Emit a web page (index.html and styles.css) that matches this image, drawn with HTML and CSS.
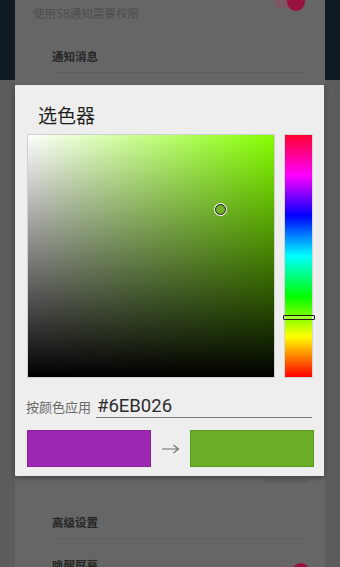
FILE: index.html
```html
<!DOCTYPE html>
<html lang="zh-CN">
<head>
<meta charset="utf-8">
<title>选色器</title>
<link rel="stylesheet" href="styles.css">
</head>
<body>
<div class="screen">
  <div class="card">
    <div class="pref">
      <span class="summary">使用S8通知需要权限</span>
      <span class="switch switch-top"></span>
    </div>
    <div class="cat">通知消息</div>
    <div class="hidden-area">
      <span class="hidden-btn"></span>
    </div>
    <div class="cat">高级设置</div>
    <div class="pref-title">
      <span class="title-text">唤醒屏幕</span>
      <span class="switch switch-bottom"></span>
    </div>
  </div>

  <div class="dialog">
    <div class="dlg-title">选色器</div>
    <div class="picker">
      <div class="sv">
        <span class="sv-marker"></span>
      </div>
      <div class="hue">
        <span class="hue-handle"></span>
      </div>
    </div>
    <div class="hex-row">
      <span class="hex-label">按颜色应用</span>
      <span class="hex-input">#6EB026</span>
    </div>
    <div class="swatches">
      <span class="swatch swatch-old"></span>
      <svg class="arrow" width="19" height="10" viewBox="0 0 19 10">
        <path d="M1 5 H17.5 M12.5 1 L17.5 5 L12.5 9" fill="none" stroke="#6f6f6f" stroke-width="1.1"/>
      </svg>
      <span class="swatch swatch-new"></span>
    </div>
  </div>
</div>
</body>
</html>
```
FILE: styles.css
```css
* { box-sizing: border-box; }
html, body { margin: 0; padding: 0; }
body {
  font-family: "Noto Sans CJK SC", "Noto Sans", sans-serif;
  background: #5c5c5c;
}
.screen {
  position: relative;
  width: 340px;
  height: 567px;
  overflow: hidden;
  background: linear-gradient(#101a22 0, #101a22 80px, #5c5c5c 80px);
}
.card {
  margin: 0 15px;
  height: 100%;
  background: #666666;
  overflow: hidden;
}
.pref {
  height: 26px;
  display: flex;
  align-items: center;
  justify-content: space-between;
  padding: 0 25px 0 18px;
}
.summary {
  font-size: 11.6px;
  color: #4e4e4e;
  line-height: 14px;
}
.switch {
  position: relative;
  width: 26px;
  height: 12px;
  border-radius: 6px;
  background: #7a5864;
}
.switch::after {
  content: "";
  position: absolute;
  left: 13px;
  top: -3px;
  width: 18px;
  height: 18px;
  border-radius: 50%;
  background: #9a1242;
}
.switch-top {
  align-self: flex-start;
  margin-top: -4px;
}
.cat {
  margin: 0 18px 0 37px;
  height: 47px;
  padding-top: 14px;
  display: flex;
  align-items: center;
  font-size: 11.5px;
  font-weight: 700;
  color: #272727;
  border-bottom: 1px solid #5f5f5f;
}
.hidden-area {
  height: 419px;
  display: flex;
  justify-content: flex-end;
  align-items: flex-end;
  padding: 0 18px 9px 0;
}
.hidden-btn {
  width: 42px;
  height: 5px;
  background: #5f5f5f;
}
.pref-title {
  display: flex;
  justify-content: space-between;
  align-items: flex-start;
  padding: 19px 20px 0 37px;
}
.title-text {
  font-size: 11.5px;
  line-height: 14px;
  font-weight: 700;
  color: #272727;
}
.switch-bottom {
  margin-top: 8px;
}

/* dialog */
.dialog {
  position: absolute;
  left: 15px;
  top: 85px;
  width: 309px;
  height: 391px;
  background: #eeeeee;
  border-radius: 1px;
  box-shadow: 0 2px 5px rgba(0,0,0,0.35);
  padding-top: 18px;
}
.dlg-title {
  padding-left: 23px;
  font-size: 19px;
  line-height: 24px;
  color: #1e1e1e;
  height: 24px;
}
.picker {
  margin-top: 7px;
  margin-left: 12px;
  display: flex;
  gap: 9px;
}
.sv {
  position: relative;
  width: 248px;
  height: 244px;
  border: 1px solid #cfcfcf;
  background:
    linear-gradient(to top, #000 0%, rgba(0,0,0,0) 100%),
    linear-gradient(to right, #fff 0%, rgba(255,255,255,0) 100%),
    hsl(88.7, 100%, 50%);
}
.sv-marker {
  position: absolute;
  left: 187px;
  top: 69px;
  width: 11px;
  height: 11px;
  border-radius: 50%;
  background: #6eb026;
  border: 1.5px solid #111;
  box-shadow: 0 0 0 1px #fff;
}
.hue {
  position: relative;
  width: 29px;
  height: 244px;
  border: 1px solid #d4d4d4;
  background: linear-gradient(to bottom,
    #ff0030 0%, #ff00ff 16.67%, #0000ff 33.33%, #00ffff 50%,
    #00ff00 66.67%, #ffff00 83.33%, #ff0000 100%);
}
.hue-handle {
  position: absolute;
  left: -2px;
  right: -3px;
  top: 180px;
  height: 5px;
  border: 1.5px solid #1a1a1a;
  border-radius: 1px;
  background: rgba(255,255,255,0.15);
}
.hex-row {
  margin-top: 17px;
  margin-left: 11px;
  display: flex;
  align-items: baseline;
  gap: 5px;
}
.hex-label {
  font-size: 13px;
  color: #6a6a6a;
}
.hex-input {
  width: 216px;
  height: 23px;
  line-height: 22px;
  padding-left: 1px;
  font-family: Roboto, "Noto Sans", sans-serif;
  font-size: 18.5px;
  color: #2b2b2b;
  border-bottom: 1px solid #7a7a7a;
}
.swatches {
  margin-top: 12px;
  margin-left: 12px;
  display: flex;
  align-items: center;
  gap: 0;
}
.swatch {
  width: 124px;
  height: 37px;
  border: 1px solid rgba(0,0,0,0.12);
}
.swatch-old { background: #9c27b0; }
.swatch-new { background: #6bae27; }
.arrow {
  margin: 0 10px 0 10px;
  flex-shrink: 0;
  display: block;
}
```
